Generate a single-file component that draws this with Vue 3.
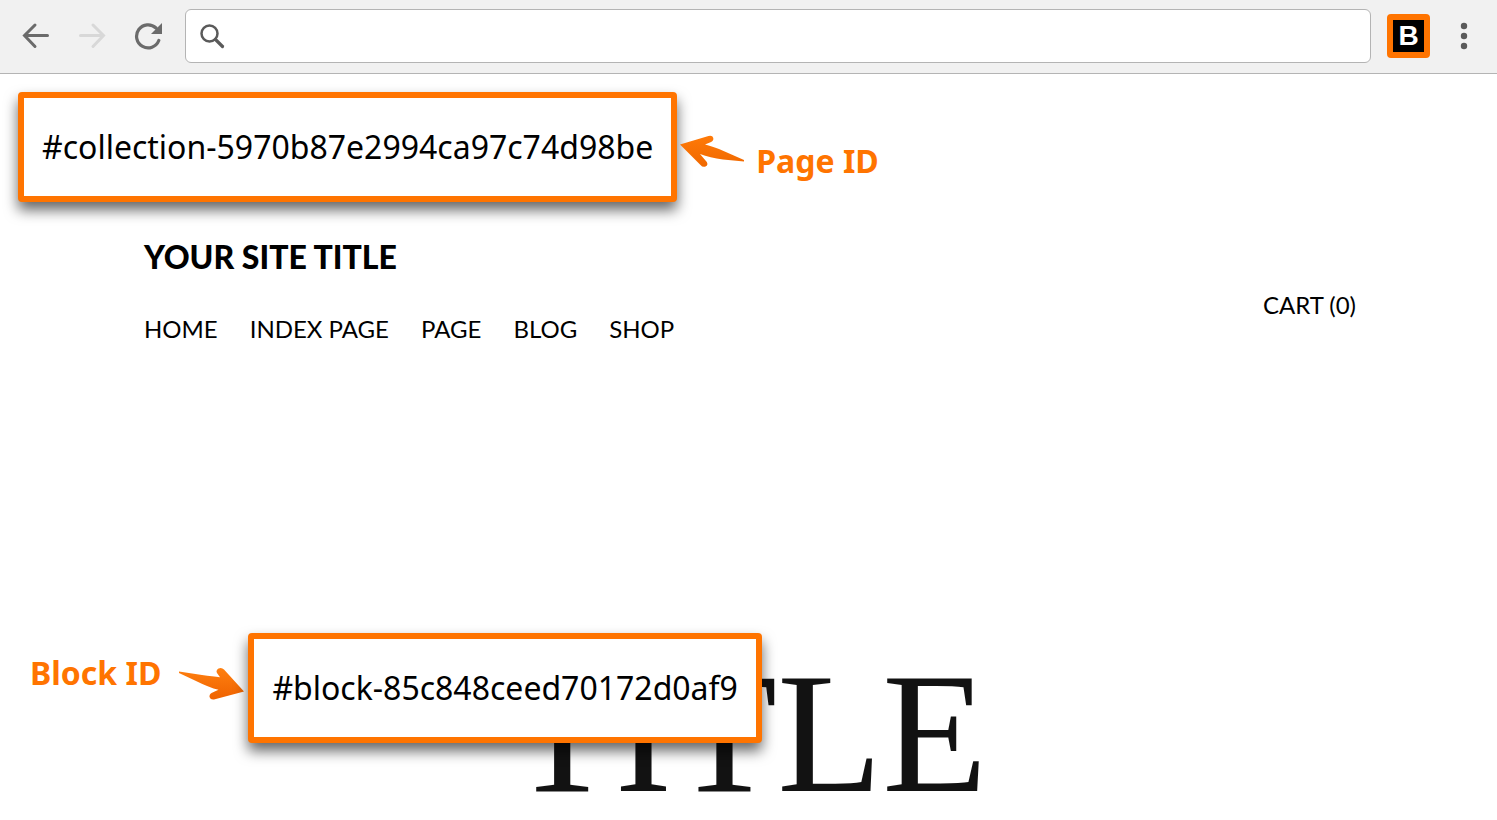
<script setup>
import { ref } from 'vue'

const address = ref('')
const links = ['Home', 'Index Page', 'Page', 'Blog', 'Shop']
const pageId = '#collection-5970b87e2994ca97c74d98be'
const blockId = '#block-85c848ceed70172d0af9'
</script>

<template>
  <div class="browser">
    <div class="toolbar">
      <div class="history">
        <button type="button" class="tool" aria-label="Back">
          <svg width="28" height="28" viewBox="0 0 28 28" fill="none" stroke="#6b6b6b" stroke-width="3" stroke-linecap="round">
            <path d="M25.500 13.500H3M13 3L2.500 13.500L13 24.500" />
          </svg>
        </button>
        <button type="button" class="tool" aria-label="Forward" disabled>
          <svg width="28" height="28" viewBox="0 0 28 28" fill="none" stroke="#d8d8d8" stroke-width="3" stroke-linecap="round">
            <path d="M2.500 13.500H25M15 3L25.500 13.500L15 24.500" />
          </svg>
        </button>
        <button type="button" class="tool" aria-label="Reload">
          <svg width="28" height="28" viewBox="0 0 28 28">
            <path d="M22 6A11.500 11.500 0 1 0 24.800 18.500" fill="none" stroke="#6b6b6b" stroke-width="3.200" stroke-linecap="round" />
            <path d="M28 1V12H17Z" fill="#6b6b6b" />
          </svg>
        </button>
      </div>
      <label class="address">
        <svg width="26" height="26" viewBox="0 0 26 26" fill="none" stroke="#5a5a5a" stroke-linecap="round">
          <circle cx="10.500" cy="10.500" r="8" stroke-width="2.500" />
          <path d="M16.500 16.500L23.500 23.500" stroke-width="3.200" />
        </svg>
        <input v-model="address" type="text" aria-label="Address" />
      </label>
      <button type="button" class="extension" aria-label="Extension B">B</button>
      <button type="button" class="menu" aria-label="Menu">
        <svg width="8" height="28" viewBox="0 0 8 28" fill="#5a5a5a">
          <circle cx="4" cy="4" r="3.200" />
          <circle cx="4" cy="14" r="3.200" />
          <circle cx="4" cy="24" r="3.200" />
        </svg>
      </button>
    </div>

    <main class="page">
      <header class="site-header">
        <div>
          <h1 class="site-title">Your Site Title</h1>
          <nav class="nav">
            <a v-for="link in links" :key="link" href="#">{{ link }}</a>
          </nav>
        </div>
        <a class="cart" href="#">Cart (0)</a>
      </header>
      <section class="hero">
        <h2 class="hero-title">TITLE</h2>
      </section>

      <div class="note page-note">
        <div class="callout">{{ pageId }}</div>
        <svg class="arrow" width="66" height="34" viewBox="0 0 66 34">
          <defs>
            <linearGradient id="page-arrow" x1="0" y1="0" x2="0" y2="1">
              <stop offset="0" stop-color="#ff7a08" />
              <stop offset="1" stop-color="#f06800" />
            </linearGradient>
          </defs>
          <path fill="url(#page-arrow)" d="M0 10.500L28.500 2Q32.500 1 33.300 4Q33.800 7 30.500 8.200L25 10.500Q30 11.500 39 15L64 26V27.500L43 25.500Q30 23.500 20 20L26.800 28Q28.500 31 25.500 32.600Q22.500 33.500 20.500 31Z" />
        </svg>
        <span class="note-label">Page ID</span>
      </div>

      <div class="note block-note">
        <span class="note-label">Block ID</span>
        <svg class="arrow" width="66" height="34" viewBox="0 0 66 34">
          <defs>
            <linearGradient id="block-arrow" x1="0" y1="0" x2="0" y2="1">
              <stop offset="0" stop-color="#ff8010" />
              <stop offset="1" stop-color="#ef6200" />
            </linearGradient>
          </defs>
          <path fill="url(#block-arrow)" d="M0 4.500V6L17 14Q30 20.500 39.500 22.800L33 25.700Q30.200 27 30.500 30Q31.500 33 35 32.500L65 24.500L45 2.500Q42.500 0 39.500 1.500Q36.500 3.500 38 6L41 10.300Q34 9.500 23 8Z" />
        </svg>
        <div class="callout">{{ blockId }}</div>
      </div>
    </main>
  </div>
</template>

<style>
body {
  margin: 0;
  background: #fff;
}
</style>

<style scoped>
.browser {
  display: flex;
  flex-direction: column;
  min-height: 100vh;
  color: #000;
  font-family: Lato, "Open Sans", sans-serif;
}

.toolbar {
  display: flex;
  align-items: center;
  box-sizing: border-box;
  padding: 9px 29px 10px 22px;
  border-bottom: 1px solid #b4b4b4;
  background: #f1f1f1;
}

button {
  padding: 0;
  border: 0;
  background: none;
}

svg {
  display: block;
  flex: none;
}

.history {
  display: flex;
  gap: 28px;
  margin-right: 23px;
}

.address {
  display: flex;
  flex: 1;
  align-items: center;
  box-sizing: border-box;
  height: 54px;
  padding: 0 13px;
  border: 1px solid #b4b4b4;
  border-radius: 6px;
  background: #fff;
}

.address input {
  flex: 1;
  min-width: 0;
  padding: 0 12px;
  border: 0;
  outline: 0;
  background: none;
  font: 24px "Open Sans", sans-serif;
}

.extension {
  box-sizing: border-box;
  width: 43px;
  height: 44px;
  margin: 0 30px 0 16px;
  border: 6px solid #ff7400;
  border-radius: 4px;
  background: #000;
  color: #fff;
  font: bold 28px/32px "Liberation Sans", sans-serif;
}

.page {
  position: relative;
  flex: 1;
}

.site-header {
  display: flex;
  align-items: flex-end;
  justify-content: space-between;
  padding: 163px 141px 0 144px;
}

.site-title {
  margin: 0;
  font-size: 32px;
  font-weight: 900;
  line-height: 40px;
  text-transform: uppercase;
}

.nav {
  display: flex;
  gap: 32px;
  margin-top: 36px;
}

.nav a,
.cart {
  color: #000;
  font-size: 24px;
  line-height: 32px;
  text-decoration: none;
  text-transform: uppercase;
}

.cart {
  padding-bottom: 24px;
}

.hero {
  padding-top: 304px;
  text-align: center;
}

.hero-title {
  margin: 0;
  color: #121212;
  font: 172px/168px "Liberation Serif", serif;
}

.note {
  position: absolute;
  display: flex;
  align-items: center;
  font-family: "Noto Sans", "Open Sans", sans-serif;
  font-size: 32px;
  line-height: 44px;
  white-space: nowrap;
}

.page-note {
  top: 18px;
  left: 18px;
}

.block-note {
  top: 559px;
  left: 30px;
}

.callout {
  padding: 27px 18px;
  border: 6px solid #ff7400;
  border-radius: 4px;
  background: #fff;
  box-shadow: 0 8px 14px rgba(0, 0, 0, 0.6);
}

.note-label {
  color: #ff7400;
  font-weight: 700;
}

.page-note .arrow {
  margin: 8px 10px 0 3px;
}

.page-note .note-label {
  padding-top: 28px;
}

.block-note .arrow {
  margin: 0 3px 8px 18px;
}

.block-note .note-label {
  padding-bottom: 30px;
}
</style>
